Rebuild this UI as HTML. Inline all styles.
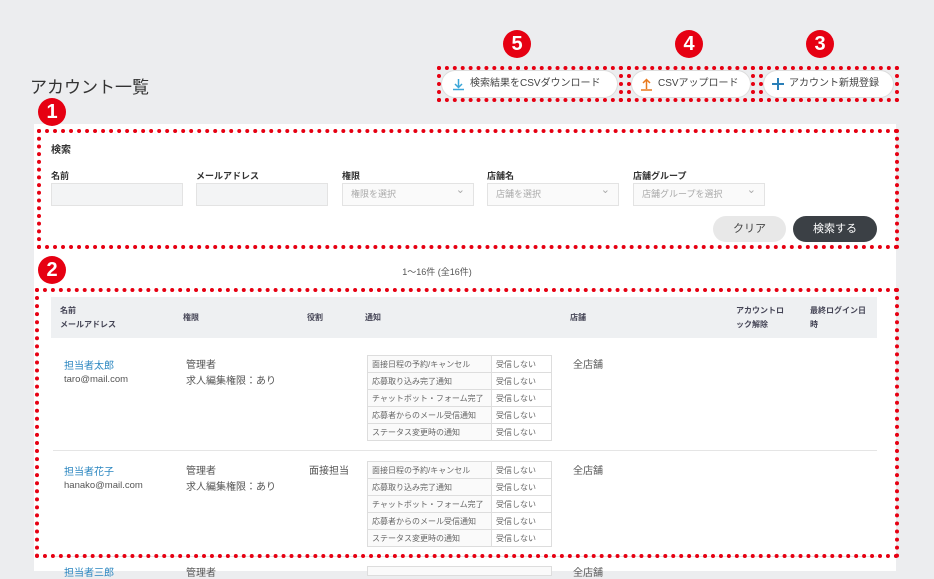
<!DOCTYPE html>
<html><head><meta charset="utf-8"><style>
*{box-sizing:border-box;margin:0;padding:0}
body{width:934px;height:571px;overflow:hidden;background:#ecedef;position:relative;font-family:"Liberation Sans","Noto Sans CJK JP",sans-serif;color:#333}
.a{position:absolute;white-space:nowrap}
.red{position:absolute;border:4px dotted #e60012}
.num{position:absolute;width:28px;height:28px;border-radius:50%;background:#e60012;color:#fff;font-weight:bold;font-size:20px;text-align:center;line-height:28px}
.btn{position:absolute;white-space:nowrap;background:#fff;border:1px solid #ddd;border-radius:16px;height:28px;font-size:10px;line-height:26px;color:#444;padding-left:28px}
.lbl{position:absolute;font-size:9px;font-weight:bold;color:#333;top:169px}
.inp{position:absolute;top:183px;width:132px;height:23px;background:#f3f4f5;border:1px solid #e3e3e3;font-size:9px;color:#aaa;line-height:21px;padding-left:8px}
.inp.s{background:#fafafa}
.inp.s:after{content:"⌄";position:absolute;right:8px;top:-4px;font-size:11px;color:#aaa}
.th{position:absolute;font-size:8px;font-weight:bold;color:#445;line-height:14px}
.nt{position:absolute;left:367px;width:185px;border:1px solid #ddd;font-size:8px;color:#666;border-collapse:collapse;white-space:nowrap}
.nt td{border:1px solid #ddd;height:17px;padding-left:4px}
.nt td:first-child{width:124px;background:#fafafa}
.t{position:absolute;font-size:10px;color:#555;white-space:nowrap}
</style></head><body>
<div class="a" style="left:30px;top:73px;font-size:17px;color:#333">アカウント一覧</div>

<div class="btn" style="left:441px;top:70px;width:177px">検索結果をCSVダウンロード<svg class="a" style="left:10px;top:7px" width="13" height="13" viewBox="0 0 13 13"><path d="M6.5 1v8M3 6l3.5 3.5L10 6M1 11.5h11" stroke="#3aa6d8" stroke-width="1.5" fill="none"/></svg></div>
<div class="btn" style="left:631px;top:70px;width:120px;padding-left:26px">CSVアップロード<svg class="a" style="left:8px;top:7px" width="13" height="13" viewBox="0 0 13 13"><path d="M6.5 11V2M3 5l3.5-3.5L10 5M1 12h11" stroke="#e8791c" stroke-width="1.5" fill="none"/></svg></div>
<div class="btn" style="left:763px;top:70px;width:131px;padding-left:25px">アカウント新規登録<svg class="a" style="left:8px;top:7px" width="12" height="12" viewBox="0 0 12 12"><path d="M6 0v12M0 6h12" stroke="#2a7fb8" stroke-width="2"/></svg></div>
<div class="red" style="left:437px;top:66px;width:186px;height:36px"></div>
<div class="red" style="left:627px;top:66px;width:128px;height:36px"></div>
<div class="red" style="left:759px;top:66px;width:140px;height:36px"></div>
<div class="num" style="left:503px;top:30px">5</div>
<div class="num" style="left:675px;top:30px">4</div>
<div class="num" style="left:806px;top:30px">3</div>

<div class="a" style="left:34px;top:124px;width:862px;height:447px;background:#fff"></div>
<div class="a" style="left:51px;top:141px;font-size:10px;font-weight:bold">検索</div>
<div class="lbl" style="left:51px">名前</div>
<div class="lbl" style="left:196px">メールアドレス</div>
<div class="lbl" style="left:342px">権限</div>
<div class="lbl" style="left:487px">店舗名</div>
<div class="lbl" style="left:633px">店舗グループ</div>
<div class="inp" style="left:51px"></div>
<div class="inp" style="left:196px"></div>
<div class="inp s" style="left:342px">権限を選択</div>
<div class="inp s" style="left:487px">店舗を選択</div>
<div class="inp s" style="left:633px">店舗グループを選択</div>
<div class="a" style="left:713px;top:216px;width:73px;height:26px;border-radius:13px;background:#e8e8e8;font-size:11px;text-align:center;line-height:26px;color:#444">クリア</div>
<div class="a" style="left:793px;top:216px;width:84px;height:26px;border-radius:13px;background:#3b4045;font-size:11px;text-align:center;line-height:26px;color:#fff">検索する</div>
<div class="red" style="left:37px;top:129px;width:862px;height:120px"></div>
<div class="num" style="left:38px;top:98px">1</div>

<div class="a" style="left:0;width:874px;top:265px;font-size:9px;color:#555;text-align:center">1〜16件 (全16件)</div>
<div class="num" style="left:38px;top:256px">2</div>

<div class="a" style="left:51px;top:297px;width:826px;height:41px;background:#eef0f2"></div>
<div class="th" style="left:60px;top:304px">名前<br>メールアドレス</div>
<div class="th" style="left:183px;top:311px">権限</div>
<div class="th" style="left:307px;top:311px">役割</div>
<div class="th" style="left:365px;top:311px">通知</div>
<div class="th" style="left:570px;top:311px">店舗</div>
<div class="th" style="left:736px;top:304px">アカウントロ<br>ック解除</div>
<div class="th" style="left:810px;top:304px">最終ログイン日<br>時</div>

<div class="t" style="left:64px;top:357px;color:#2a86c0">担当者太郎</div>
<div class="t" style="left:64px;top:374px;font-size:9.5px">taro@mail.com</div>
<div class="t" style="left:186px;top:356px">管理者</div>
<div class="t" style="left:186px;top:372px">求人編集権限：あり</div>
<div class="t" style="left:573px;top:356px">全店舗</div>
<table class="nt" style="top:355px"><tr><td>面接日程の予約/キャンセル</td><td>受信しない</td></tr><tr><td>応募取り込み完了通知</td><td>受信しない</td></tr><tr><td>チャットボット・フォーム完了</td><td>受信しない</td></tr><tr><td>応募者からのメール受信通知</td><td>受信しない</td></tr><tr><td>ステータス変更時の通知</td><td>受信しない</td></tr></table>
<div class="a" style="left:53px;top:450px;width:824px;height:1px;background:#e5e5e5"></div>

<div class="t" style="left:64px;top:463px;color:#2a86c0">担当者花子</div>
<div class="t" style="left:64px;top:480px;font-size:9.5px">hanako@mail.com</div>
<div class="t" style="left:186px;top:462px">管理者</div>
<div class="t" style="left:186px;top:478px">求人編集権限：あり</div>
<div class="t" style="left:309px;top:462px">面接担当</div>
<div class="t" style="left:573px;top:462px">全店舗</div>
<table class="nt" style="top:461px"><tr><td>面接日程の予約/キャンセル</td><td>受信しない</td></tr><tr><td>応募取り込み完了通知</td><td>受信しない</td></tr><tr><td>チャットボット・フォーム完了</td><td>受信しない</td></tr><tr><td>応募者からのメール受信通知</td><td>受信しない</td></tr><tr><td>ステータス変更時の通知</td><td>受信しない</td></tr></table>
<div class="a" style="left:53px;top:556px;width:824px;height:1px;background:#e5e5e5"></div>
<div class="t" style="left:64px;top:564px;color:#2a86c0">担当者三郎</div>
<div class="t" style="left:186px;top:564px">管理者</div>
<div class="t" style="left:573px;top:564px">全店舗</div>
<div class="a" style="left:367px;top:566px;width:185px;height:10px;border:1px solid #ddd;background:#fafafa"></div>
<div class="red" style="left:35px;top:288px;width:864px;height:270px"></div>
</body></html>
